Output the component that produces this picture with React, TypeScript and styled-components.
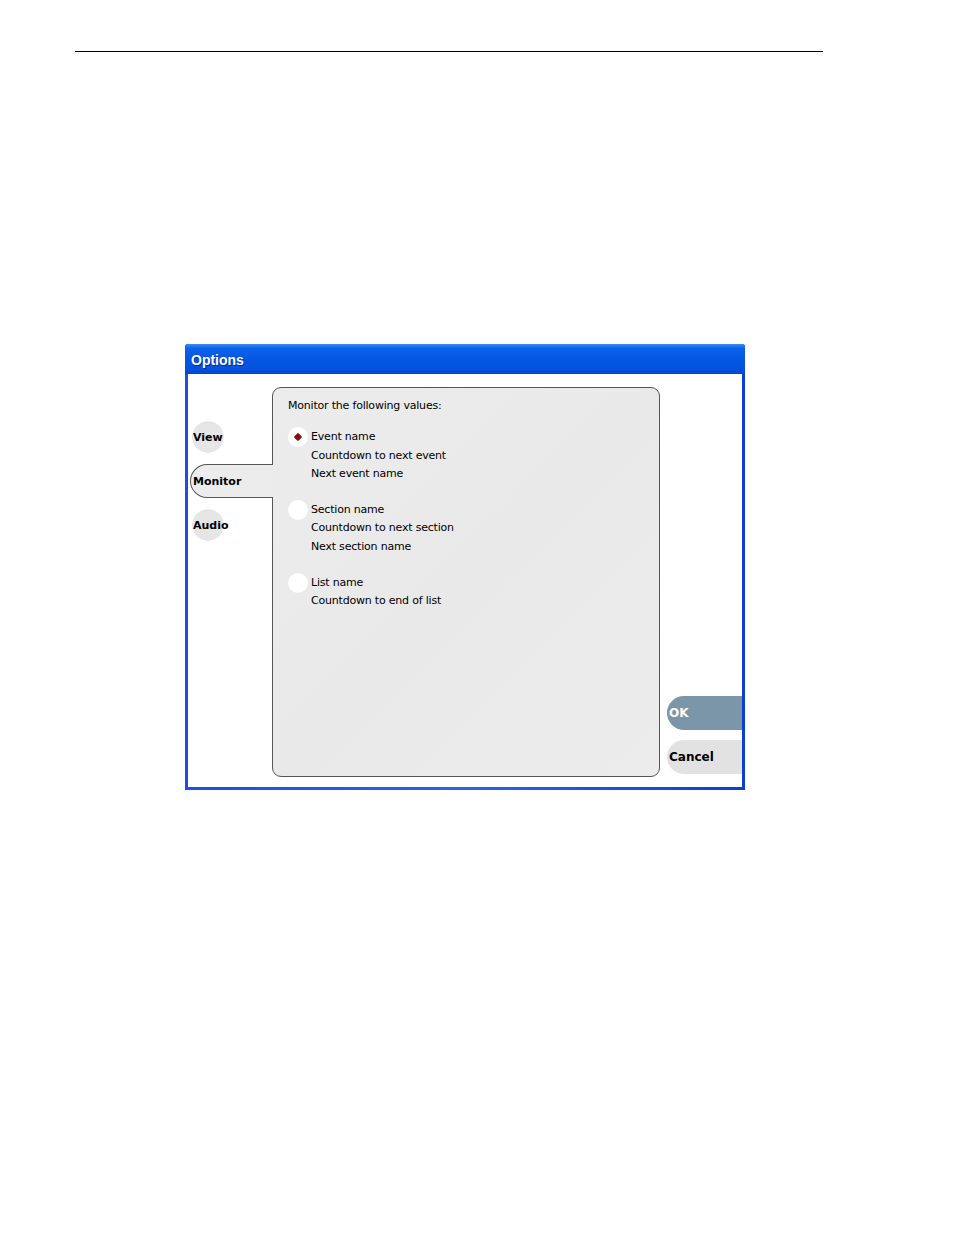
import styled, { createGlobalStyle } from 'styled-components';

const GlobalStyle = createGlobalStyle`
	body {
		margin: 0;
		background: #ffffff;
		font-family: 'DejaVu Sans', Verdana, sans-serif;
	}
`;

const monitorGroups = [
	{ selected: true, lines: ['Event name', 'Countdown to next event', 'Next event name'] },
	{ selected: false, lines: ['Section name', 'Countdown to next section', 'Next section name'] },
	{ selected: false, lines: ['List name', 'Countdown to end of list'] }
];

const tabs = ['View', 'Monitor', 'Audio'];

const Page = styled.div`
	width: 954px;
	height: 1235px;
	display: flex;
	flex-direction: column;
	box-sizing: border-box;
	padding-top: 51px;
`;

const Rule = styled.div`
	margin-left: 75px;
	width: 748px;
	height: 1px;
	background: #000000;
`;

const Window = styled.div`
	margin: 292px 0 0 185px;
	width: 560px;
	height: 446px;
	display: flex;
	flex-direction: column;
	background: linear-gradient(90deg, #1650e6 0%, #2a62ee 50%, #0a3fd6 100%);
	border-radius: 3px 3px 0 0;
	overflow: hidden;
`;

const TitleBar = styled.div`
	height: 30px;
	display: flex;
	align-items: center;
	padding: 1px 6px 0;
	box-sizing: border-box;
	background: linear-gradient(180deg, #3c8cf6 0%, #0d62ea 14%, #0457e3 50%, #0353e0 80%, #0246cf 100%);
	color: #ffffff;
	font-family: 'Liberation Sans', Arial, sans-serif;
	font-weight: bold;
	font-size: 14px;
	text-shadow: 1px 1px 0 #0b2a8c;
`;

const Body = styled.div`
	flex: 1;
	margin: 0 3px 3px 3px;
	display: flex;
	background: #ffffff;
	padding: 13px 0 10px;
`;

const TabColumn = styled.div`
	width: 84px;
	display: flex;
	flex-direction: column;
	gap: 11px;
	padding-top: 34px;
`;

const Tab = styled.div<{ $active?: boolean }>`
	height: ${p => (p.$active ? '34px' : '32px')};
	display: flex;
	align-items: center;
	padding-top: 1px;
	font-size: 11px;
	font-weight: bold;
	color: #000000;
	white-space: nowrap;
	box-sizing: border-box;
	${p =>
		p.$active
			? `
		position: relative;
		z-index: 1;
		margin: 0 -1px 0 2px;
		padding-left: 2px;
		background: #ececec;
		border: 1px solid #555555;
		border-right: none;
		border-radius: 17px 0 0 17px;
	`
			: `
		margin-left: 4px;
		padding-left: 1px;
		background: radial-gradient(circle at 16px 16px, #e6e6e6 15.5px, transparent 16px);
	`}
`;

const Panel = styled.div`
	width: 388px;
	box-sizing: border-box;
	border: 1px solid #555555;
	border-radius: 9px;
	background: linear-gradient(135deg, #ececec 0%, #e9e9e9 50%, #ececec 100%);
	padding: 9px 15px;
	display: flex;
	flex-direction: column;
	gap: 13px;
	font-size: 11px;
	letter-spacing: -0.2px;
	line-height: 18.3px;
	color: #000000;
`;

const Heading = styled.div``;

const Groups = styled.div`
	display: flex;
	flex-direction: column;
	gap: 18px;
`;

const Group = styled.div`
	display: flex;
	align-items: flex-start;
	gap: 3px;
`;

const Radio = styled.div<{ $checked?: boolean }>`
	width: 20px;
	height: 20px;
	margin-top: -1px;
	border-radius: 50%;
	background: #ffffff;
	display: flex;
	align-items: center;
	justify-content: center;
	flex-shrink: 0;
	&::after {
		content: '';
		width: 6px;
		height: 6px;
		transform: rotate(45deg);
		border-radius: 1px;
		background: ${p => (p.$checked ? '#8b0a0a' : 'transparent')};
	}
`;

const Lines = styled.div`
	display: flex;
	flex-direction: column;
`;

const ButtonColumn = styled.div`
	flex: 1;
	display: flex;
	flex-direction: column;
	justify-content: flex-end;
	gap: 10px;
	padding: 0 0 3px 7px;
`;

const ActionButton = styled.div<{ $primary?: boolean }>`
	height: 34px;
	display: flex;
	align-items: center;
	padding-left: 2px;
	border-radius: 17px 0 0 17px;
	background: ${p => (p.$primary ? '#7b95a9' : '#e2e2e2')};
	color: ${p => (p.$primary ? '#ffffff' : '#000000')};
	font-size: 12px;
	font-weight: bold;
`;

const App = () => {
	return (
		<Page>
			<GlobalStyle />
			<Rule />
			<Window>
				<TitleBar>Options</TitleBar>
				<Body>
					<TabColumn>
						{tabs.map(t => (
							<Tab key={t} $active={t === 'Monitor'}>
								{t}
							</Tab>
						))}
					</TabColumn>
					<Panel>
						<Heading>Monitor the following values:</Heading>
						<Groups>
							{monitorGroups.map((g, i) => (
								<Group key={i}>
									<Radio $checked={g.selected} />
									<Lines>
										{g.lines.map(l => (
											<div key={l}>{l}</div>
										))}
									</Lines>
								</Group>
							))}
						</Groups>
					</Panel>
					<ButtonColumn>
						<ActionButton $primary>OK</ActionButton>
						<ActionButton>Cancel</ActionButton>
					</ButtonColumn>
				</Body>
			</Window>
		</Page>
	);
};

export default App;
